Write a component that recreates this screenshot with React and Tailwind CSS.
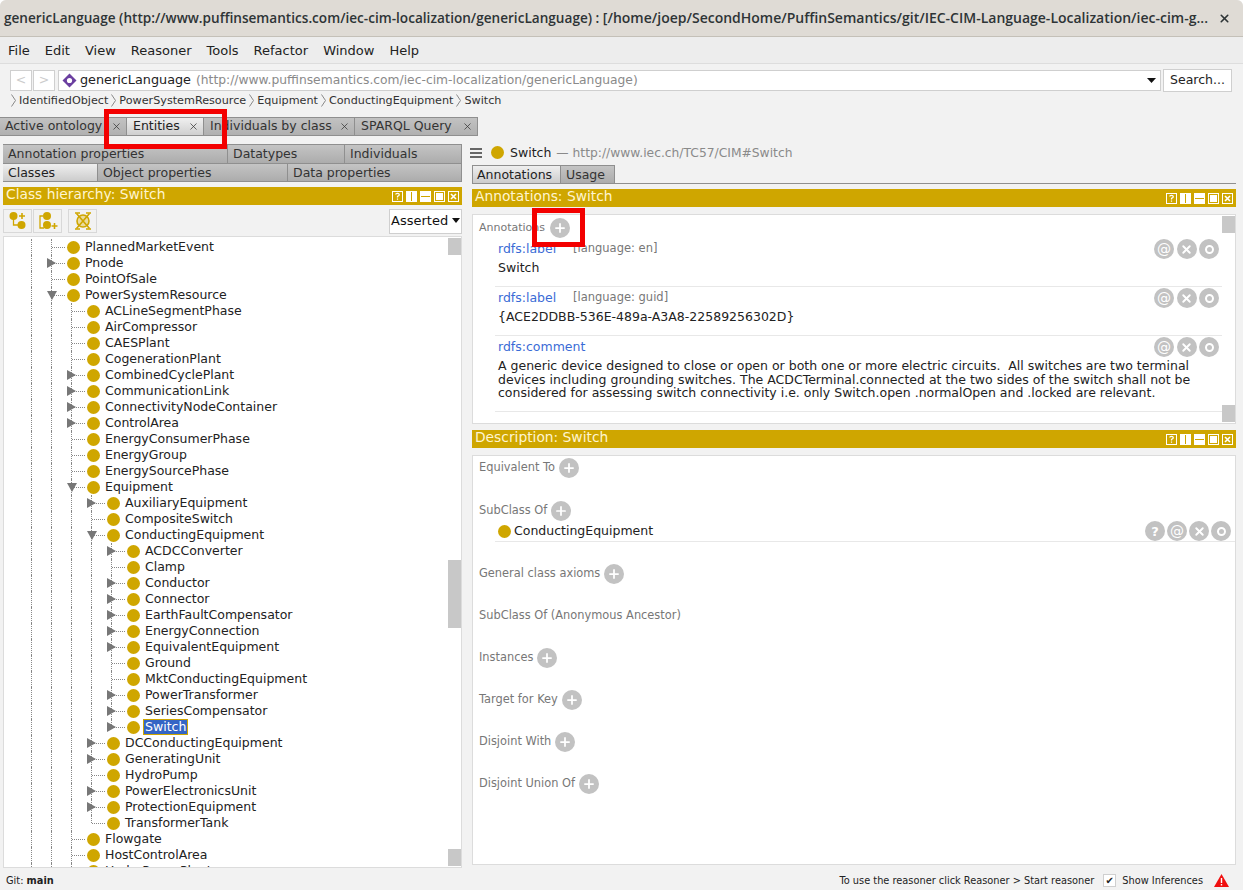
import { Plus, X } from "lucide-react";

const GOLD = "bg-[#cfa600]";

const treeRows = [
  ["PlannedMarketEvent", 0],
  ["Pnode", 0, "r"],
  ["PointOfSale", 0],
  ["PowerSystemResource", 0, "d"],
  ["ACLineSegmentPhase", 1],
  ["AirCompressor", 1],
  ["CAESPlant", 1],
  ["CogenerationPlant", 1],
  ["CombinedCyclePlant", 1, "r"],
  ["CommunicationLink", 1, "r"],
  ["ConnectivityNodeContainer", 1, "r"],
  ["ControlArea", 1, "r"],
  ["EnergyConsumerPhase", 1],
  ["EnergyGroup", 1],
  ["EnergySourcePhase", 1],
  ["Equipment", 1, "d"],
  ["AuxiliaryEquipment", 2, "r"],
  ["CompositeSwitch", 2],
  ["ConductingEquipment", 2, "d"],
  ["ACDCConverter", 3, "r"],
  ["Clamp", 3],
  ["Conductor", 3, "r"],
  ["Connector", 3, "r"],
  ["EarthFaultCompensator", 3, "r"],
  ["EnergyConnection", 3, "r"],
  ["EquivalentEquipment", 3, "r"],
  ["Ground", 3],
  ["MktConductingEquipment", 3],
  ["PowerTransformer", 3, "r"],
  ["SeriesCompensator", 3, "r"],
  ["Switch", 3, "r", "last", "selected"],
  ["DCConductingEquipment", 2, "r"],
  ["GeneratingUnit", 2, "r"],
  ["HydroPump", 2],
  ["PowerElectronicsUnit", 2, "r"],
  ["ProtectionEquipment", 2, "r"],
  ["TransformerTank", 2, null, "last"],
  ["Flowgate", 1],
  ["HostControlArea", 1],
  ["HydroPowerPlant", 1],
];

function Dot() {
  return <span className={`h-[13px] w-[13px] shrink-0 rounded-full ${GOLD}`} />;
}

function Expander({ dir }) {
  if (dir === "r") {
    return (
      <svg className="absolute left-[-4px] top-[3px]" width="9" height="10" viewBox="0 0 9 10">
        <path d="M0 0 L9 5 L0 10 Z" fill="#777" />
      </svg>
    );
  }
  return (
    <svg className="absolute left-[-4px] top-[4px]" width="10" height="9" viewBox="0 0 10 9">
      <path d="M0 0 L10 0 L5 9 Z" fill="#777" />
    </svg>
  );
}

function TreeRow({ name, depth, expander, last, selected }) {
  const cols = [];
  for (let i = 0; i < depth + 1; i++) {
    cols.push(<span key={i} className="h-4 w-5 shrink-0 border-l border-dotted border-[#888]" />);
  }
  return (
    <div className="flex h-4 items-center pl-[27px]">
      {cols}
      <span className="relative flex h-4 w-4 shrink-0 items-center">
        <span className={`absolute left-0 top-0 border-l border-dotted border-[#888] ${last ? "h-2" : "h-4"}`} />
        <span className="ml-px w-[13px] border-t border-dotted border-[#888]" />
        {expander && <Expander dir={expander} />}
      </span>
      <Dot />
      {selected ? (
        <span className="ml-[3px] flex h-4 items-center border border-[#cfa600] bg-[#3465c5] pl-px pr-px text-white">
          {name}
        </span>
      ) : (
        <span className="ml-[5px] text-[#222]">{name}</span>
      )}
    </div>
  );
}

function Tab({ children, selected, className = "" }) {
  return (
    <div
      className={`flex items-center border-r border-t border-[#8f8f8f] pl-[5px] ${
        selected
          ? "bg-linear-to-b from-[#efefef] to-[#cccccc] text-[#222]"
          : "bg-linear-to-b from-[#c4c4c4] to-[#acacac] text-[#333]"
      } ${className}`}
    >
      {children}
    </div>
  );
}

function TopTab({ label, selected, width }) {
  return (
    <div
      className={`flex h-[19px] items-center justify-between border-b border-r border-t border-[#8f8f8f] pl-[6px] pr-[4px] ${width} ${
        selected
          ? "bg-linear-to-b from-[#f0f0f0] to-[#cfcfcf] text-[#222]"
          : "bg-linear-to-b from-[#c2c2c2] to-[#b0b0b0] text-[#333]"
      }`}
    >
      <span className="whitespace-nowrap">{label}</span>
      <X size={11} strokeWidth={1.6} className="shrink-0 text-[#333]" />
    </div>
  );
}

function HeaderIcons() {
  return (
    <div className="flex gap-[3px]">
      <svg width="11" height="11" viewBox="0 0 11 11" fill="none" stroke="#fff">
        <rect x="0.5" y="0.5" width="10" height="10" />
        <path d="M3.7 3.6 Q3.7 2.3 5.5 2.3 Q7.3 2.3 7.3 3.7 Q7.3 4.7 5.5 5.4 V6.6 M5.5 7.6 V8.8" strokeWidth="1.2" />
      </svg>
      <svg width="11" height="11" viewBox="0 0 11 11">
        <path d="M0 0 H11 V11 H0 Z" fill="#fff" />
        <path d="M5 1 H6 V10 H5 Z" fill="#cfa600" />
      </svg>
      <svg width="11" height="11" viewBox="0 0 11 11">
        <path d="M0 0 H11 V11 H0 Z" fill="#fff" />
        <path d="M1 5 H10 V6 H1 Z" fill="#cfa600" />
      </svg>
      <svg width="11" height="11" viewBox="0 0 11 11" fill="none" stroke="#fff">
        <rect x="0.5" y="0.5" width="10" height="10" />
        <rect x="2" y="2" width="7" height="7" fill="#fff" stroke="none" />
      </svg>
      <svg width="11" height="11" viewBox="0 0 11 11" fill="none" stroke="#fff">
        <rect x="0.5" y="0.5" width="10" height="10" />
        <path d="M3 3 L8 8 M8 3 L3 8" strokeWidth="1.6" />
      </svg>
    </div>
  );
}

function ViewBar({ title }) {
  return (
    <div className={`flex h-[18px] items-center justify-between pl-[3px] pr-[3px] text-[13.8px] text-[#fff5d0] ${GOLD}`}>
      <span className="pb-[2px]">{title}</span>
      <HeaderIcons />
    </div>
  );
}

function RoundBtn({ children }) {
  return (
    <span className="flex h-[20px] w-[20px] shrink-0 items-center justify-center rounded-full bg-[#c2c2c2] text-white">
      {children}
    </span>
  );
}

function AddBtn() {
  return (
    <RoundBtn>
      <Plus size={14} strokeWidth={3} />
    </RoundBtn>
  );
}

function AtBtn() {
  return (
    <RoundBtn>
      <span className="text-[14px] leading-none">@</span>
    </RoundBtn>
  );
}

function XBtn() {
  return (
    <RoundBtn>
      <X size={13} strokeWidth={3.5} />
    </RoundBtn>
  );
}

function ODot() {
  return (
    <RoundBtn>
      <span className="h-[9px] w-[9px] rounded-full border-[2.5px] border-white" />
    </RoundBtn>
  );
}

function QBtn() {
  return (
    <RoundBtn>
      <span className="text-[13px] font-bold leading-none">?</span>
    </RoundBtn>
  );
}

function AnnotationRow({ name, lang, children, tail = "pb-[12px]" }) {
  return (
    <div className={`ml-[22px] border-b border-[#e8e8e8] pl-[3px] ${tail}`}>
      <div className="flex h-[22px] items-center">
        <span className="w-[75px] text-[#3a6bd6]">{name}</span>
        {lang && <span className="text-[11.5px] text-[#777]">[language: {lang}]</span>}
        <span className="ml-auto mr-[3px] flex gap-[2.5px]">
          <AtBtn />
          <XBtn />
          <ODot />
        </span>
      </div>
      <div className="mt-[1px] leading-[13px] text-[#222]">{children}</div>
    </div>
  );
}

function Section({ label, add = true }) {
  return (
    <div className="flex h-[42px] items-start pl-[6px] text-[11.4px] text-[#777]">
      <span className="flex h-[24px] items-center gap-[4px]">
        {label}
        {add && <AddBtn />}
      </span>
    </div>
  );
}

export default function App() {
  return (
    <div className="relative h-[890px] w-[1243px] overflow-hidden bg-white font-['DejaVu_Sans',sans-serif] text-[12.5px] leading-none text-[#222]">
      <div className="flex h-full flex-col overflow-hidden rounded-t-[6px] bg-[#f2f2f2]">
        {/* Title bar */}
        <div className="flex h-[37px] shrink-0 items-center justify-between border-b border-[#c4c0b8] bg-[#dfdbd5] pl-[4px] pr-[12px] font-['Open_Sans',sans-serif] text-[13.6px] font-semibold text-[#2e3436]">
          <span className="whitespace-nowrap">
            genericLanguage (http://www.puffinsemantics.com/iec-cim-localization/genericLanguage) :{" "}
            <span className="text-[14px]">[/home/joep/SecondHome/PuffinSemantics/git/IEC-CIM-Language-Localization/iec-cim-g...</span>
          </span>
          <X size={13} strokeWidth={3} className="shrink-0" />
        </div>

        {/* Menu */}
        <div className="flex h-[27px] shrink-0 items-center gap-[15px] border-b border-[#dddddd] bg-[#ededed] pl-[8px] text-[13px] text-[#222]">
          <span>File</span>
          <span>Edit</span>
          <span>View</span>
          <span>Reasoner</span>
          <span>Tools</span>
          <span>Refactor</span>
          <span>Window</span>
          <span>Help</span>
        </div>

        {/* Address */}
        <div className="flex h-[27px] shrink-0 items-center pl-[10px] pt-[5px]">
          <span className="flex h-[21px] w-[22px] items-center justify-center border border-[#cfcfcf] bg-white text-[#ccc]">&lt;</span>
          <span className="ml-[1px] flex h-[21px] w-[22px] items-center justify-center border border-[#cfcfcf] bg-white text-[#ccc]">&gt;</span>
          <div className="ml-[3px] flex h-[21px] w-[1103px] items-center border border-[#cfcfcf] bg-white pl-[3px]">
            <svg width="15" height="15" viewBox="0 0 15 15">
              <path d="M7.5 0.5 L14.5 7.5 L7.5 14.5 L0.5 7.5 Z" fill="#6b3fa0" />
              <circle cx="7.5" cy="7.5" r="2.6" fill="#fff" />
            </svg>
            <span className="ml-[3px] text-[12.8px]">genericLanguage</span>
            <span className="ml-[5px] text-[12.3px] text-[#8a8a8a]">(http://www.puffinsemantics.com/iec-cim-localization/genericLanguage)</span>
            <svg className="ml-auto mr-[4px]" width="9" height="5" viewBox="0 0 9 5">
              <path d="M0 0 H9 L4.5 5 Z" fill="#111" />
            </svg>
          </div>
          <span className="ml-[2px] flex h-[23px] w-[69px] items-center justify-center border border-[#cfcfcf] bg-white">Search...</span>
        </div>

        {/* Breadcrumb */}
        <div className="mb-[6px] flex h-[19px] shrink-0 items-center pl-[11px] text-[11.2px] text-[#333]">
          {["IdentifiedObject", "PowerSystemResource", "Equipment", "ConductingEquipment", "Switch"].map((c) => (
            <span key={c} className="flex items-center">
              <svg width="5" height="13" viewBox="0 0 5 13" fill="none" stroke="#888">
                <path d="M0.5 0.5 L4.5 6.5 L0.5 12.5" />
              </svg>
              <span className="pl-[3px] pr-[3px]">{c}</span>
            </span>
          ))}
        </div>

        {/* Workspace tabs */}
        <div className="ml-[-1px] flex h-[20px] shrink-0 pt-[1px]">
          <TopTab label="Active ontology" width="w-[128px]" />
          <TopTab label="Entities" selected width="w-[77px]" />
          <TopTab label="Individuals by class" width="w-[151px]" />
          <TopTab label="SPARQL Query" width="w-[123px]" />
        </div>

        {/* Main */}
        <div className="flex min-h-0 flex-1 pl-[3px] pt-[8px]">
          {/* Left */}
          <div className="flex w-[459px] shrink-0 flex-col">
            <div className="grid h-[19px] shrink-0 grid-cols-[225px_117px_117px]">
              <Tab>Annotation properties</Tab>
              <Tab>Datatypes</Tab>
              <Tab>Individuals</Tab>
            </div>
            <div className="grid h-[19px] shrink-0 grid-cols-[95px_190px_174px] border-b border-[#8f8f8f]">
              <Tab selected className="pt-px">Classes</Tab>
              <Tab className="pt-px">Object properties</Tab>
              <Tab className="pt-px">Data properties</Tab>
            </div>
            <div className="mt-[5px] shrink-0">
              <ViewBar title="Class hierarchy: Switch" />
            </div>
            <div className="flex h-[31px] shrink-0 items-start pt-[4px]">
              <span className="flex h-[24px] w-[29px] items-center justify-center border border-[#d8d8d8]">
                <svg width="20" height="20" viewBox="0 0 20 20" fill="none">
                  <circle cx="5.5" cy="5" r="4" fill="#cfa600" />
                  <circle cx="13.5" cy="14" r="4" fill="#cfa600" />
                  <path d="M5.5 8 V14 H10" stroke="#cfa600" strokeWidth="1.3" />
                  <path d="M11 5 H17 M14 2 V8" stroke="#cfa600" strokeWidth="1.6" />
                </svg>
              </span>
              <span className="ml-[1px] flex h-[24px] w-[29px] items-center justify-center border border-[#d8d8d8]">
                <svg width="20" height="20" viewBox="0 0 20 20" fill="none">
                  <circle cx="9" cy="5" r="4" fill="#cfa600" />
                  <circle cx="9" cy="14" r="4" fill="#cfa600" />
                  <path d="M5 5 H2 V17 H6" stroke="#cfa600" strokeWidth="1.3" />
                  <path d="M13.5 15 H19.5 M16.5 12 V18" stroke="#cfa600" strokeWidth="1.6" />
                </svg>
              </span>
              <span className="ml-[6px] flex h-[24px] w-[29px] items-center justify-center border border-[#d8d8d8]">
                <svg width="20" height="20" viewBox="0 0 20 20" fill="none">
                  <circle cx="10" cy="10" r="6" fill="#eadca0" stroke="#cfa600" strokeWidth="1.6" />
                  <path d="M3.5 2.5 L16.5 17.5 M16.5 2.5 L3.5 17.5" stroke="#cfa600" strokeWidth="1.6" />
                  <path d="M2 2 H7 M13 2 H18 M2 18 H7 M13 18 H18" stroke="#cfa600" strokeWidth="1.4" />
                </svg>
              </span>
              <div className="ml-auto flex h-[25px] w-[73px] items-center justify-between border border-[#cfcfcf] bg-white pb-[2px] pl-[1px] pr-[1px] text-[13px] text-[#111]">
                Asserted
                <svg width="8" height="5" viewBox="0 0 8 5">
                  <path d="M0 0 H8 L4 5 Z" fill="#111" />
                </svg>
              </div>
            </div>
            <div className="flex h-[632px] shrink-0 overflow-hidden border border-[#dcdcdc] bg-white pt-[1px]">
              <div className="min-w-0 flex-1 pt-px">
                {treeRows.map(([name, depth, expander, last, selected]) => (
                  <TreeRow key={name} name={name} depth={depth} expander={expander} last={!!last} selected={!!selected} />
                ))}
              </div>
              <div className="flex w-[13px] shrink-0 flex-col justify-between pb-px">
                <span className="h-[17px] bg-[#c8c8c8]" />
                <span className="mt-[305px] h-[68px] bg-[#c8c8c8]" />
                <span className="mt-auto h-[17px] bg-[#c8c8c8]" />
              </div>
            </div>
          </div>

          {/* Right */}
          <div className="ml-[10px] flex w-[764px] shrink-0 flex-col">
            <div className="mb-[4px] flex h-[17px] shrink-0 items-center">
              <span className="ml-[-2px] flex w-[12px] flex-col gap-[2px]">
                <span className="h-[2px] bg-[#666]" />
                <span className="h-[2px] bg-[#666]" />
                <span className="h-[2px] bg-[#666]" />
              </span>
              <span className="ml-[9px] flex">
                <Dot />
              </span>
              <span className="ml-[6px] pt-px text-[#222]">Switch</span>
              <span className="ml-[5px] pt-px text-[12.3px] text-[#8a8a8a]">— http://www.iec.ch/TC57/CIM#Switch</span>
            </div>
            <div className="flex h-[19px] shrink-0 border-b border-[#8f8f8f]">
              <div className="flex w-[89px] items-center border-l border-r border-t border-[#8f8f8f] bg-linear-to-b from-[#efefef] to-[#cccccc] pl-[4px] pt-px">Annotations</div>
              <div className="flex w-[54px] items-center border-r border-t border-[#8f8f8f] bg-linear-to-b from-[#c4c4c4] to-[#acacac] pl-[5px] pt-px text-[#333]">Usage</div>
            </div>
            <div className="mt-[5px] shrink-0">
              <ViewBar title="Annotations: Switch" />
            </div>
            <div className="mt-[7px] flex h-[210px] shrink-0 border border-[#dcdcdc] bg-white">
              <div className="min-w-0 flex-1">
                <div className="flex h-[23px] items-center gap-[5px] pl-[6px] pt-[2px] text-[11px] text-[#777]">
                  Annotations
                  <AddBtn />
                </div>
                <AnnotationRow name="rdfs:label" lang="en">Switch</AnnotationRow>
                <AnnotationRow name="rdfs:label" lang="guid">{"{ACE2DDBB-536E-489a-A3A8-22589256302D}"}</AnnotationRow>
                <AnnotationRow name="rdfs:comment" tail="pb-[11px]">
                  <span className="block w-[710px] leading-[13.5px]">
                    A generic device designed to close or open or both one or more electric circuits. &nbsp;All switches are two terminal devices including grounding switches. The ACDCTerminal.connected at the two sides of the switch shall not be considered for assessing switch connectivity i.e. only Switch.open .normalOpen and .locked are relevant.
                  </span>
                </AnnotationRow>
              </div>
              <div className="flex w-[13px] shrink-0 flex-col justify-between py-px">
                <span className="h-[17px] bg-[#c8c8c8]" />
                <span className="h-[17px] bg-[#c8c8c8]" />
              </div>
            </div>
            <div className="mt-[6px] shrink-0">
              <ViewBar title="Description: Switch" />
            </div>
            <div className="mt-[7px] h-[410px] shrink-0 border border-[#dcdcdc] bg-white">
              <Section label="Equivalent To" />
              <div className="mt-px flex h-[23px] items-center gap-[4px] pl-[6px] text-[11.4px] text-[#777]">
                SubClass Of
                <AddBtn />
              </div>
              <div className="ml-[22px] flex h-[20px] items-center border-b border-[#e8e8e8] pb-[1px] pl-[3px]">
                <Dot />
                <span className="ml-[3px]">ConductingEquipment</span>
                <span className="ml-auto mr-[4px] flex gap-[2px]">
                  <QBtn />
                  <AtBtn />
                  <XBtn />
                  <ODot />
                </span>
              </div>
              <div className="h-[20px]" />
              <Section label="General class axioms" />
              <Section label="SubClass Of (Anonymous Ancestor)" add={false} />
              <Section label="Instances" />
              <Section label="Target for Key" />
              <Section label="Disjoint With" />
              <Section label="Disjoint Union Of" />
            </div>
          </div>
        </div>

        {/* Status */}
        <div className="flex h-[22px] shrink-0 items-center justify-between pl-[6px] pr-[14px] pt-[3px] text-[9.8px] text-[#222]">
          <span>
            Git: <b>main</b>
          </span>
          <span className="flex items-center">
            To use the reasoner click Reasoner &gt; Start reasoner
            <span className="ml-[9px] flex h-[13px] w-[13px] items-center justify-center border border-[#cfcfcf] bg-white text-[10px] leading-none">✔</span>
            <span className="ml-[6px]">Show Inferences</span>
            <svg className="ml-[11px]" width="15" height="13" viewBox="0 0 15 13">
              <path d="M7.5 0 L15 13 H0 Z" fill="#f01010" />
              <path d="M6.8 4 H8.2 V9 H6.8 Z M6.8 10 H8.2 V11.5 H6.8 Z" fill="#fff" />
            </svg>
          </span>
        </div>
      </div>

      {/* Red highlight boxes from the original annotated screenshot */}
      <div className="absolute left-[104px] top-[109px] h-[40px] w-[123px] border-[5px] border-[#f30000]" />
      <div className="absolute left-[532px] top-[208px] h-[39px] w-[53px] border-[5px] border-[#f30000]" />
    </div>
  );
}
